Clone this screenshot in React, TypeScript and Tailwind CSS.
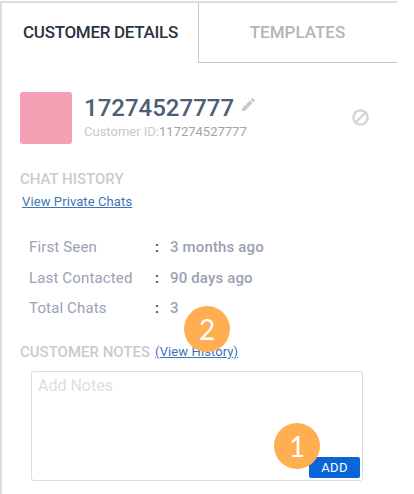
import React from 'react';

const stats = [
  { label: 'First Seen', value: '3 months ago' },
  { label: 'Last Contacted', value: '90 days ago' },
  { label: 'Total Chats', value: '3' },
];

const Marker = ({ n, className }: { n: number; className: string }) => (
  <div className={`absolute flex h-[46px] w-[46px] items-center justify-center rounded-full bg-[#ffae52] font-['Lato',sans-serif] text-[28px] text-white ${className}`}>
    {n}
  </div>
);

const App: React.FC = () => {
  return (
    <div className="h-[494px] w-[414px] overflow-hidden bg-white font-['Roboto',sans-serif]">
      <div className="relative mt-px h-[493px] w-[397px] border-t-2 border-l-2 border-[#dcdcdc]">
        {/* Tabs */}
        <div className="flex h-[60px]">
          <div className="flex w-[197px] items-start justify-center border-r border-[#c8c8c8] pt-[19px] pl-px text-[17px] leading-5 font-medium tracking-[-0.3px] text-[#2b333f]">
            CUSTOMER DETAILS
          </div>
          <div className="flex flex-1 items-start justify-center border-b border-[#c8c8c8] pt-[19px] pr-px text-[17px] leading-5 font-medium text-[#b5b5b5]">
            TEMPLATES
          </div>
        </div>

        {/* Customer */}
        <div className="mt-[29px] flex pl-[18px]">
          <div className="h-[52px] w-[52px] rounded-[3px] bg-[#f5a0b5]" />
          <div className="ml-3 flex-1">
            <div className="flex h-[32px] items-center text-2xl leading-8 text-[#4e5d78]">
              <span className="font-medium">17274527777</span>
              <svg viewBox="0 0 24 24" className="mb-[8px] ml-[6px] h-[17px] w-[17px] fill-[#c9c9c9]">
                <path d="M3 17.25V21h3.75L17.81 9.94l-3.75-3.75L3 17.25zM20.71 7.04a1 1 0 0 0 0-1.41l-2.34-2.34a1 1 0 0 0-1.41 0l-1.83 1.83 3.75 3.75 1.83-1.83z" />
              </svg>
            </div>
            <div className="text-[13px] leading-[15px] text-[#c9c9c9]">
              Customer ID:<span className="text-[#a3a3a3]">117274527777</span>
            </div>
          </div>
          <svg viewBox="0 0 24 24" className="mt-[16px] mr-[27px] h-[19px] w-[19px] fill-none stroke-[#d4d4d4] stroke-[3]">
            <circle cx="12" cy="12" r="9" />
            <path d="M6 18 18 6" />
          </svg>
        </div>

        {/* Chat history */}
        <div className="mt-[25px] pl-[18px] text-[15px] leading-5 font-medium text-[#cbcbcb]">CHAT HISTORY</div>
        <a className="mt-[5px] ml-5 block w-fit text-[13px] leading-4 tracking-[0.1px] text-[#3d74b8] underline">View Private Chats</a>

        <div className="mt-[27px] flex flex-col gap-[10.5px] pl-[27px] text-[15px] leading-5 tracking-[0.15px]">
          {stats.map(s => (
            <div key={s.label} className="flex">
              <span className="w-[126px] text-[#9aa1b3]">{s.label}</span>
              <span className="w-[15px] font-medium text-[#444]">:</span>
              <span className="font-medium text-[#9aa1b3]">{s.value}</span>
            </div>
          ))}
        </div>

        {/* Notes */}
        <div className="mt-[24px] flex items-center pl-[18px]">
          <span className="text-[15px] leading-5 font-medium text-[#cbcbcb]">CUSTOMER NOTES</span>
          <a className="ml-[5px] text-[13px] tracking-[0.1px] text-[#3d74b8] underline">(View History)</a>
        </div>
        <div className="relative mt-[9px] ml-[29px] h-[110px] w-[332px] rounded-[3px] border border-[#dcdcdc] px-[6px] py-[3px] text-base leading-[22px] text-[#dedede]">
          Add Notes
          <button className="absolute right-[2px] bottom-[2px] flex h-[21px] w-[51px] items-center justify-center rounded-[2px] bg-[#0a66d8] text-[13px] tracking-[0.3px] text-white">
            ADD
          </button>
        </div>

        <Marker n={2} className="top-[303px] left-[182px]" />
        <Marker n={1} className="top-[420px] left-[272px]" />
      </div>
    </div>
  );
};

export default App;
